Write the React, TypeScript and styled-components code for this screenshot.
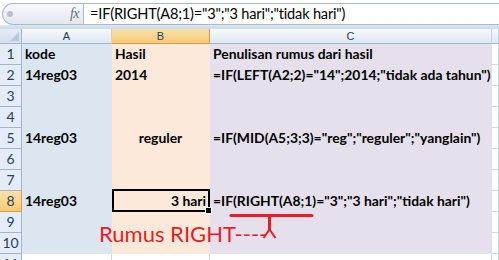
import React from 'react';
import styled, { createGlobalStyle } from 'styled-components';

const Global = createGlobalStyle`
  html, body { margin: 0; padding: 0; background: #ffffff; }
  body { width: 499px; height: 260px; overflow: hidden; font-family: Lato, "Open Sans", sans-serif; }
`;

const Page = styled.div`
  position: relative;
  width: 499px;
  height: 260px;
  overflow: hidden;
  display: flex;
  flex-direction: column;
  background: #ffffff;
`;

const FormulaBar = styled.div`
  height: 29px;
  box-sizing: border-box;
  padding: 3px 0 4px 2px;
  display: flex;
  background: linear-gradient(to bottom, #ffffff 0, #ffffff 25px, #dde7f2 25px, #cdd9e7 29px);
`;

const NameBox = styled.div`
  width: 81px;
  height: 22px;
  box-sizing: border-box;
  border: 1px solid #a9b9cc;
  border-right: none;
  border-radius: 11px 0 0 11px;
  background: linear-gradient(to bottom, #f6f8fb, #e2e8ef);
  display: flex;
  align-items: center;
  justify-content: space-between;
  padding: 0 4px 0 4px;
`;

const Grip = styled.span`
  width: 6px;
  height: 6px;
  border-radius: 50%;
  background: #b9c0c8;
`;

const FxLabel = styled.span`
  font-family: "Liberation Serif", serif;
  font-style: italic;
  font-size: 14px;
  color: #6b6f75;
  letter-spacing: -0.5px;
`;

const FormulaInput = styled.div`
  flex: 1;
  height: 22px;
  box-sizing: border-box;
  border: 1px solid #a9b9cc;
  border-right: none;
  background: #ffffff;
  padding-left: 6px;
  font-family: Lato, sans-serif;
  font-size: 14.6px;
  letter-spacing: -0.2px;
  line-height: 20px;
  color: #000;
  white-space: nowrap;
`;

const Sheet = styled.div`
  display: grid;
  grid-template-columns: 22px 90px 98px 282px 1fr;
  grid-template-rows: 15px repeat(11, 21px);
  background: #ffffff;
`;

const Corner = styled.div`
  position: relative;
  box-sizing: border-box;
  border-right: 1px solid #9eb6ce;
  border-bottom: 1px solid #9eb6ce;
  background: linear-gradient(to bottom, #e4ecf7, #d4dfee);
  &::after {
    content: '';
    position: absolute;
    right: 2px;
    bottom: 2px;
    width: 0;
    height: 0;
    border-left: 9px solid transparent;
    border-bottom: 9px solid #b9c9dc;
  }
`;

const ColHead = styled.div<{ $selected?: boolean }>`
  box-sizing: border-box;
  display: flex;
  align-items: center;
  justify-content: center;
  font-family: "Liberation Sans", Arial, sans-serif;
  font-size: 11px;
  color: #27405f;
  border-right: 1px solid ${(p) => (p.$selected ? '#f29536' : '#c5d2e0')};
  border-bottom: 1px solid ${(p) => (p.$selected ? '#f29536' : '#9eb6ce')};
  background: ${(p) =>
    p.$selected
      ? 'linear-gradient(to bottom, #f9e0a9, #f5cc75)'
      : 'linear-gradient(to bottom, #f8fafd, #dfe7f1)'};
`;

const RowHead = styled.div<{ $selected?: boolean }>`
  box-sizing: border-box;
  display: flex;
  align-items: flex-end;
  justify-content: center;
  padding-bottom: 2px;
  font-family: Lato, sans-serif;
  font-size: 14px;
  color: #27405f;
  border-right: 1px solid ${(p) => (p.$selected ? '#f29536' : '#9eb6ce')};
  border-bottom: 1px solid ${(p) => (p.$selected ? '#f29536' : '#9eb6ce')};
  background: ${(p) =>
    p.$selected ? 'linear-gradient(to bottom, #f9e0a9, #f5cc75)' : '#e4ecf7'};
`;

type Align = 'left' | 'center' | 'right';

const Cell = styled.div<{ $fill?: string; $align?: Align; $active?: boolean }>`
  position: relative;
  box-sizing: border-box;
  display: flex;
  align-items: flex-end;
  justify-content: ${(p) =>
    p.$align === 'center' ? 'center' : p.$align === 'right' ? 'flex-end' : 'flex-start'};
  padding: 0 3px 1px 3px;
  background: ${(p) => p.$fill || 'transparent'};
  border-right: 1px solid ${(p) => p.$fill || '#d0d7e5'};
  border-bottom: 1px solid ${(p) => p.$fill || '#d0d7e5'};
  font-family: Lato, sans-serif;
  font-weight: 700;
  font-size: 13.9px;
  line-height: 18px;
  color: #000;
  white-space: nowrap;
  overflow: visible;
  z-index: ${(p) => (p.$active ? 2 : 0)};
  ${(p) =>
    p.$active &&
    `
    &::after {
      content: '';
      position: absolute;
      left: 0;
      top: -2px;
      right: -1px;
      bottom: -1px;
      border: 2px solid #000;
    }
    &::before {
      content: '';
      position: absolute;
      right: -3px;
      bottom: -3px;
      width: 5px;
      height: 5px;
      background: #000;
      border: 1px solid #fff;
      z-index: 3;
    }
  `}
`;

const Note = styled.div`
  position: absolute;
  left: 99px;
  top: 221px;
  font-family: Lato, sans-serif;
  font-size: 22px;
  line-height: 26px;
  color: #ed1c24;
  white-space: nowrap;
`;

const Marker = styled.svg`
  position: absolute;
  left: 0;
  top: 0;
  pointer-events: none;
`;

const BLUE = '#dce6f1';
const PEACH = '#fde9d9';
const LAV = '#e5e0ec';

type RowData = { a?: string; b?: string; bAlign?: Align; c?: string; active?: boolean };

const rows: RowData[] = [
  { a: 'kode', b: 'Hasil', c: 'Penulisan rumus dari hasil' },
  { a: '14reg03', b: '2014', c: '=IF(LEFT(A2;2)="14";2014;"tidak ada tahun")' },
  {},
  {},
  { a: '14reg03', b: 'reguler', bAlign: 'center', c: '=IF(MID(A5;3;3)="reg";"reguler";"yanglain")' },
  {},
  {},
  { a: '14reg03', b: '3 hari', bAlign: 'right', c: '=IF(RIGHT(A8;1)="3";"3 hari";"tidak hari")', active: true },
  {},
  {},
];

export default function App() {
  return (
    <Page>
      <Global />
      <FormulaBar>
        <NameBox>
          <Grip />
          <FxLabel>fx</FxLabel>
        </NameBox>
        <FormulaInput>=IF(RIGHT(A8;1)="3";"3 hari";"tidak hari")</FormulaInput>
      </FormulaBar>
      <Sheet>
        <Corner />
        <ColHead>A</ColHead>
        <ColHead $selected>B</ColHead>
        <ColHead>C</ColHead>
        <ColHead />
        {rows.map((r, i) => (
          <React.Fragment key={i}>
            <RowHead $selected={!!r.active}>{i + 1}</RowHead>
            <Cell $fill={BLUE}>{r.a}</Cell>
            <Cell $fill={PEACH} $align={r.bAlign} $active={r.active}>
              {r.b}
            </Cell>
            <Cell $fill={LAV}>{r.c}</Cell>
            <Cell />
          </React.Fragment>
        ))}
        <RowHead>11</RowHead>
        <Cell />
        <Cell />
        <Cell />
        <Cell />
      </Sheet>
      <Note>Rumus RIGHT----</Note>
      <Marker width="499" height="260" viewBox="0 0 499 260">
        <line x1="231" y1="215.5" x2="312" y2="215.5" stroke="#ed1c24" strokeWidth="3" strokeLinecap="round" />
        <line x1="269.5" y1="216" x2="269.5" y2="230" stroke="#ed1c24" strokeWidth="3" />
        <path d="M263.5 238 L269.5 229.5 L275.5 238" fill="none" stroke="#ed1c24" strokeWidth="2" />
      </Marker>
    </Page>
  );
}
